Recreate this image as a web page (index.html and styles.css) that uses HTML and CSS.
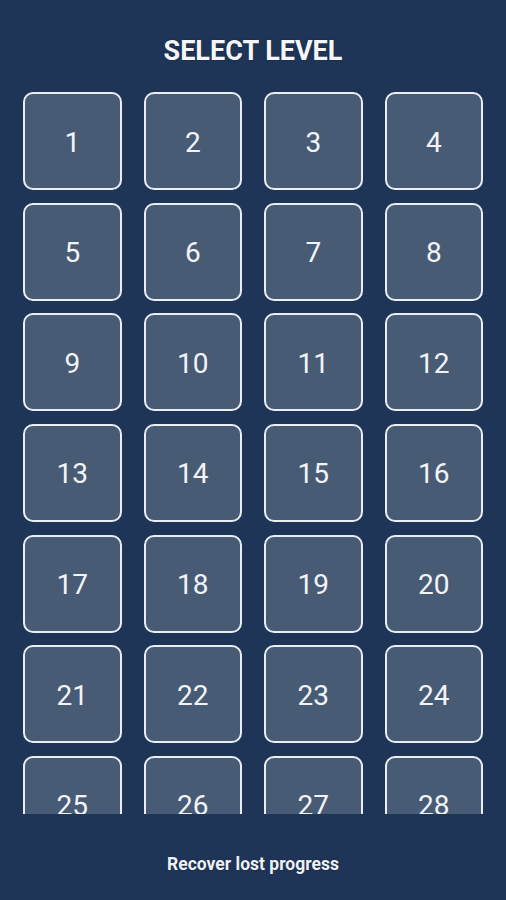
FILE: index.html
```html
<!DOCTYPE html>
<html lang="en">
<head>
  <meta charset="UTF-8" />
  <meta name="viewport" content="width=device-width, initial-scale=1.0"/>
  <title>Select Level</title>
  <link rel="stylesheet" href="styles.css">
</head>
<body>
  <div class="screen">
    <h1 class="title">SELECT LEVEL</h1>

    <div class="levels" id="levels"></div>

    <div class="footer">
      <a href="#" class="recover">Recover lost progress</a>
    </div>
  </div>

  <script>
    const levelsEl = document.getElementById('levels');

    for (let i = 1; i <= 32; i++) {
      const btn = document.createElement('button');
      btn.className = 'level';
      btn.textContent = i;
      levelsEl.appendChild(btn);
    }
  </script>
</body>
</html>
```

FILE: styles.css
```css
body {
  margin: 0;
  background-color: #1f3558;
  font-family: Roboto, "Noto Sans", sans-serif;
  color: #f2f4f7;
}
.screen {
  display: flex;
  flex-direction: column;
  height: 900px;
}
.title {
  margin: 0;
  padding-top: 36px;
  height: 30px;
  line-height: 30px;
  font-size: 27px;
  font-weight: bold;
  text-align: center;
  color: #f4f6f9;
  text-shadow: 0 0 2px rgba(0, 0, 0, 0.4);
}
.levels {
  margin-top: 26px;
  height: 722px;
  overflow: hidden;
  padding: 0 23px;
  display: grid;
  grid-template-columns: repeat(4, 1fr);
  grid-auto-rows: 98px;
  column-gap: 22px;
  row-gap: 12.67px;
}
.level {
  background-color: #485b75;
  border: 2px solid #e9eef4;
  border-radius: 10px;
  color: #f2f4f7;
  font-family: Roboto, "Noto Sans", sans-serif;
  font-size: 28px;
  padding: 2px 0 0;
  cursor: pointer;
}
.level:hover {
  background-color: #52667f;
}
.footer {
  flex: 1;
  padding-top: 40px;
  text-align: center;
}
.recover {
  font-size: 17.5px;
  line-height: 20px;
  font-weight: bold;
  color: #eef1f5;
  text-decoration: none;
  text-shadow: 0 0 2px rgba(0, 0, 0, 0.35);
}
```
